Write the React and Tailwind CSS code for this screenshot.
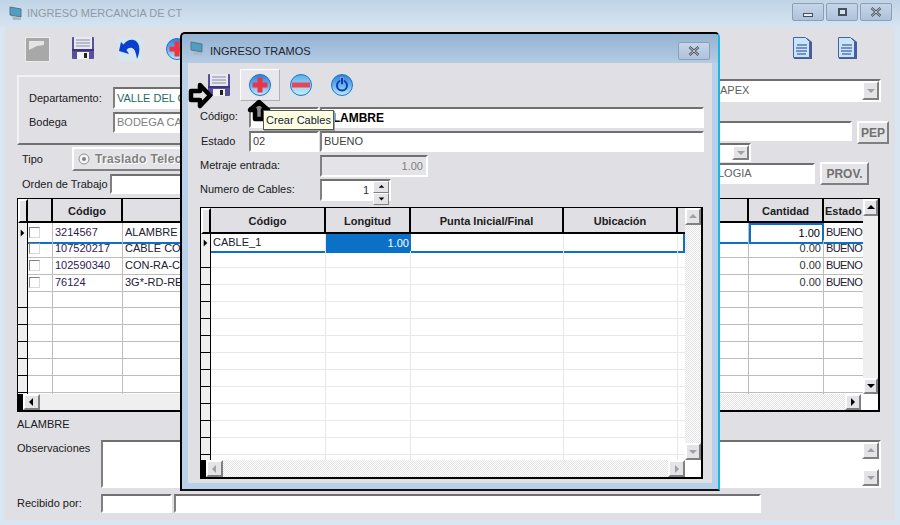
import React from 'react';

const sunken = 'border-2 border-t-[#707070] border-l-[#808080] border-r-white border-b-white';
const raised = 'border-2 border-t-white border-l-white border-r-[#808080] border-b-[#808080] bg-[#e4e4e8]';
const dither = 'bg-[repeating-conic-gradient(#e2e2e2_0_25%,#ffffff_0_50%)] bg-[length:2px_2px]';

function Field({ className = '', textClass = 'text-[#404040]', children }) {
  return (
    <div className={`${sunken} bg-white flex items-center px-[2px] whitespace-nowrap overflow-hidden ${textClass} ${className}`}>
      {children}
    </div>
  );
}

function Arrow({ dir, color = '#000' }) {
  const points = { up: '1,6 5,2 9,6', down: '1,3 5,7 9,3', left: '6,1 2,5 6,9', right: '3,1 7,5 3,9' };
  return (
    <svg width="10" height="10" viewBox="0 0 10 10">
      <polygon points={points[dir]} fill={color} />
    </svg>
  );
}

function ScrollBtn({ dir, color, className = '' }) {
  return (
    <div className={`${raised} flex items-center justify-center shrink-0 ${className}`}>
      <Arrow dir={dir} color={color} />
    </div>
  );
}

function Floppy() {
  return (
    <svg width="22" height="22" viewBox="0 0 22 22">
      <rect x="0" y="0" width="22" height="22" rx="1" fill="#5a4f9c" />
      <rect x="2" y="0" width="18" height="12" fill="#e8e8f0" />
      <path d="M4 3h14M4 6h14M4 9h14" stroke="#8a8aa8" strokeWidth="1" />
      <rect x="5" y="15" width="12" height="7" fill="#f2f2f2" />
      <rect x="12" y="16" width="3" height="5" fill="#222" />
      <rect x="0" y="12" width="22" height="2" fill="#3d3580" />
    </svg>
  );
}

function Ball({ id = 'ballFill', top = '#2f7fd8', mid = '#6fb5ee', children }) {
  return (
    <svg width="24" height="24" viewBox="-1 -1 24 24">
      <defs>
        <linearGradient id={id} x1="0" y1="0" x2="0" y2="1">
          <stop offset="0" stopColor={top} />
          <stop offset="0.55" stopColor={mid} />
          <stop offset="1" stopColor="#c4ecfb" />
        </linearGradient>
      </defs>
      <circle cx="11" cy="11" r="12" fill="#d2e6ee" />
      <circle cx="11" cy="11" r="10.5" fill={`url(#${id})`} stroke="#2c6fc0" />
      {children}
    </svg>
  );
}

const PlusBall = () => (
  <Ball id="plusFill">
    <path d="M8.500 3.500h5v5H18.500v5h-5v5h-5v-5h-5v-5h5z" fill="#ee3344" />
  </Ball>
);
const MinusBall = () => (
  <Ball id="minusFill" top="#58aee8" mid="#9ad4f4">
    <rect x="2" y="8.500" width="18" height="5" fill="#e8455a" />
  </Ball>
);
const PowerBall = () => (
  <Ball id="powerFill">
    <circle cx="11" cy="11.500" r="5" fill="none" stroke="#0b3fb0" strokeWidth="2" />
    <rect x="9.500" y="3.500" width="3" height="7" fill="#0b3fb0" stroke="#8cc4f0" strokeWidth="0.600" />
  </Ball>
);

function FlagIcon() {
  return (
    <svg width="25" height="25" viewBox="0 0 25 25">
      <rect x="0.500" y="0.500" width="24" height="24" fill="#a8a8a8" stroke="#ececec" />
      <polygon points="4,4 19,4 19,8 12,9 4,13" fill="#e4e4e4" />
    </svg>
  );
}

function UndoIcon() {
  return (
    <svg width="24" height="24" viewBox="0 0 24 24">
      <rect width="24" height="24" fill="#d5e6ee" />
      <path d="M1 14L3 5l2.500 2.500C10 1 19 1 21 9c1 4 0 8-2 13-1-6-2-10-5-11-2-.6-4 0-5.500 2L11 17z" fill="#0a3fd0" />
    </svg>
  );
}

function DocIcon() {
  return (
    <svg width="20" height="23" viewBox="0 0 20 23">
      <path d="M1 1h13l5 4v17H1z" fill="#4a5aa0" />
      <path d="M0.500 0.500h12l4 4v16H0.500z" fill="#c6e6fa" stroke="#5060a8" />
      <path d="M4 8h10M3 11h11M3 14h11M4 17h9" stroke="#2a3a90" strokeWidth="1" />
    </svg>
  );
}

function MonitorIcon() {
  return (
    <svg width="15" height="15" viewBox="0 0 15 15">
      <path d="M1 1l11 2v8L1 9z" fill="#4f9fc4" stroke="#5a7488" />
      <path d="M3 10l9 2v2H4z" fill="#aab8c4" />
    </svg>
  );
}

function WinBtn({ className = '', children }) {
  return (
    <div className={`h-[18px] rounded-[2px] border border-[#8c9fb8] bg-gradient-to-b from-[#c6d6e8] to-[#aec2da] flex items-center justify-center ${className}`}>
      {children}
    </div>
  );
}

const CloseGlyph = () => (
  <svg width="12" height="10" viewBox="0 0 12 10">
    <path d="M1.500 1l9 8M10.500 1l-9 8" stroke="#45505e" strokeWidth="2.400" />
    <path d="M1.500 1l9 8M10.500 1l-9 8" stroke="#e8edf2" strokeWidth="0.800" />
  </svg>
);

function Checkbox() {
  return <div className="w-[11px] h-[11px] border border-t-[#808080] border-l-[#808080] border-r-[#d8d8d8] border-b-[#d8d8d8] bg-white" />;
}

const mainRows = [
  ['3214567', 'ALAMBRE', '1.00', 'BUENO'],
  ['107520217', 'CABLE COA', '0.00', 'BUENO'],
  ['102590340', 'CON-RA-CO', '0.00', 'BUENO'],
  ['76124', '3G*-RD-RE', '0.00', 'BUENO'],
  [], [], [], [], [], [], [],
];

function MainGrid() {
  const cols = 'grid grid-cols-[10px_25px_70px_578px_48px_75px_39px]';
  const head = 'border-r-2 border-r-black border-b-2 border-b-black flex items-center justify-center font-bold pt-[3px]';
  return (
    <div className="ml-[12px] w-[863px] h-[214px] border-t border-l border-r-2 border-b-2 border-black flex flex-col overflow-hidden bg-white">
      <div className="flex flex-1 min-h-0">
        <div className="w-[845px] flex flex-col min-h-0">
          <div className={`${cols} h-[24px] shrink-0 bg-[#dfdfe4]`}>
            <div className={`${raised} !border-r-black !border-b-black`} />
            <div className={head} />
            <div className={head}>Código</div>
            <div className={head} />
            <div className={`${head} !justify-start pl-[2px]`}>V.</div>
            <div className={head}>Cantidad</div>
            <div className={`${head} !border-r-0 !justify-start pl-[1px]`}>Estado</div>
          </div>
          <div className="flex-1 min-h-0 overflow-hidden">
            {mainRows.map((r, i) => {
              const line = i === 0 ? 'border-b-2 border-b-[#0a70c8]' : 'border-b border-b-[#bdbdbd]';
              return (
                <div key={i} className={`${cols} h-[17px]`}>
                  <div className="bg-[#efefef] border-r border-r-black border-b border-b-black flex items-center justify-center">
                    {i === 0 && <Arrow dir="right" />}
                  </div>
                  <div className={`${line} border-r border-r-[#bdbdbd] flex items-center pl-[1px]`}>{r[0] && <Checkbox />}</div>
                  <div className={`${line} border-r border-r-[#bdbdbd] flex items-center px-[2px] text-[#301a50]`}>{r[0]}</div>
                  <div className={`${line} border-r border-r-[#bdbdbd] flex items-center px-[2px] text-[#202030]`}>{r[1]}</div>
                  <div className={`${line} border-r border-r-[#bdbdbd]`} />
                  <div className={`flex items-center justify-end px-[2px] ${i === 0 ? 'border-2 border-[#0a70c8] text-black' : `${line} border-r border-r-[#bdbdbd] text-[#303030]`}`}>{r[2]}</div>
                  <div className={`${line} flex items-center pl-[2px] text-[#202030] tracking-[-0.6px]`}>{r[3]}</div>
                </div>
              );
            })}
          </div>
        </div>
        <div className="flex-1 flex flex-col bg-[#efefef]">
          <ScrollBtn dir="up" className="h-[17px]" />
          <div className="flex-1" />
          <ScrollBtn dir="down" className="h-[16px]" />
        </div>
      </div>
      <div className="h-[16px] shrink-0 flex">
        <div className="w-[5px] bg-black" />
        <ScrollBtn dir="left" className="w-[17px]" />
        <div className="w-[460px] bg-[#efefef]" />
        <div className={`flex-1 ${dither}`} />
        <ScrollBtn dir="right" className="w-[16px]" />
        <div className="w-[17px] bg-white" />
      </div>
    </div>
  );
}

function DialogGrid() {
  const cols = 'grid grid-cols-[10px_115px_85px_153px_114px_7px]';
  const head = 'border-r-2 border-r-black border-b-2 border-b-black flex items-center justify-center font-bold pt-[3px]';
  const rows = Array.from({ length: 14 }, (_, i) => i);
  return (
    <div className="ml-[12px] mt-[6px] w-[503px] h-[272px] border-t border-l border-r-2 border-b-2 border-black flex flex-col overflow-hidden bg-white">
      <div className="flex flex-1 min-h-0">
        <div className="w-[484px] flex flex-col min-h-0">
          <div className={`${cols} h-[26px] shrink-0 bg-[#dfdfe4]`}>
            <div className={`${raised} !border-r-black !border-b-black`} />
            <div className={head}>Código</div>
            <div className={head}>Longitud</div>
            <div className={head}>Punta Inicial/Final</div>
            <div className={head}>Ubicación</div>
            <div className="border-b-2 border-b-black" />
          </div>
          <div className="flex-1 min-h-0 overflow-hidden">
            {rows.map((i) => {
              const line = i === 0 ? 'border-b-2 border-b-[#0a70c8]' : 'border-b border-b-[#e8e8e8]';
              return (
                <div key={i} className={`${cols} h-[17px]`}>
                  <div className="bg-[#efefef] border-r border-r-black border-b border-b-black flex items-center justify-center">
                    {i === 0 && <Arrow dir="right" />}
                  </div>
                  <div className={`${line} border-r border-r-[#e8e8e8] flex items-center px-[2px] text-[#202030]`}>{i === 0 && 'CABLE_1'}</div>
                  <div className={`flex items-center justify-end px-[2px] ${i === 0 ? 'bg-[#0a70c8] text-white' : `${line} border-r border-r-[#e8e8e8]`}`}>{i === 0 && '1.00'}</div>
                  <div className={`${line} border-r border-r-[#e8e8e8]`} />
                  <div className={`${line} border-r border-r-[#e8e8e8]`} />
                  <div className={`${line} ${i === 0 ? 'border-r-2 border-r-[#0a70c8]' : ''}`} />
                </div>
              );
            })}
          </div>
        </div>
        <div className={`flex-1 flex flex-col ${dither}`}>
          <ScrollBtn dir="up" color="#a0a0a0" className="h-[17px]" />
          <div className="flex-1" />
          <ScrollBtn dir="down" color="#a0a0a0" className="h-[17px]" />
        </div>
      </div>
      <div className="h-[17px] shrink-0 flex">
        <div className="w-[5px] bg-black" />
        <ScrollBtn dir="left" color="#a0a0a0" className="w-[17px]" />
        <div className={`flex-1 ${dither}`} />
        <ScrollBtn dir="right" color="#a0a0a0" className="w-[17px]" />
        <div className="w-[16px] bg-white" />
      </div>
    </div>
  );
}

function Dialog() {
  return (
    <div className="absolute left-[180px] top-[32px] w-[540px] h-[459px] rounded-t-[5px] border-2 border-black border-r-[#18b8e0] border-b-[#111] bg-[#b9d1e8] flex flex-col">
      <div className="h-[29px] shrink-0 rounded-t-[4px] bg-gradient-to-b from-[#94b2d2] to-[#b4cce4] flex items-center pl-[8px] pr-[8px] gap-[5px] text-[#1c2430]">
        <MonitorIcon />
        <span className="mt-[6px]">INGRESO TRAMOS</span>
        <WinBtn className="ml-auto w-[32px] mt-[4px]"><CloseGlyph /></WinBtn>
      </div>
      <div className="ml-[6px] mr-[6px] h-[420px] bg-[#dfdfe4] flex flex-col">
        <div className="h-[44px] shrink-0 flex items-start">
          <div className="ml-[20px] mt-[11px]"><Floppy /></div>
          <div className="ml-[10px] mt-[6px] w-[40px] h-[32px] border border-t-white border-l-white border-r-[#b0b0b0] border-b-[#b0b0b0] bg-[#e8e8ec] flex items-center justify-center"><PlusBall /></div>
          <div className="ml-[9px] mt-[10px]"><MinusBall /></div>
          <div className="ml-[17px] mt-[10px]"><PowerBall /></div>
        </div>
        <div className="h-[24px] shrink-0 flex items-start">
          <span className="ml-[12px] w-[49px] mt-[1px]">Código:</span>
          <Field className="w-[70px] h-[21px]" />
          <Field className="w-[384px] h-[21px] ml-[1px] text-[12px] font-bold" textClass="text-black">ALAMBRE</Field>
        </div>
        <div className="h-[24px] shrink-0 flex items-start">
          <span className="ml-[13px] w-[48px] mt-[2px]">Estado</span>
          <Field className="w-[70px] h-[21px]">02</Field>
          <Field className="w-[384px] h-[21px] ml-[1px]">BUENO</Field>
        </div>
        <div className="h-[24px] shrink-0 flex items-start">
          <span className="ml-[12px] w-[120px] mt-[2px]">Metraje entrada:</span>
          <div className={`${sunken} w-[108px] h-[22px] bg-[#e4e4e8] flex items-center justify-end px-[3px] text-[#808080]`}>1.00</div>
        </div>
        <div className="h-[22px] shrink-0 flex items-start">
          <span className="ml-[12px] w-[120px] mt-[2px]">Numero de Cables:</span>
          <div className={`${sunken} w-[71px] h-[22px] bg-white flex items-stretch justify-end text-[#303030]`}>
            <span className="self-center pr-[4px]">1</span>
            <div className="w-[16px] flex flex-col">
              <ScrollBtn dir="up" className="flex-1 !border-[1px] [&_svg]:w-[7px]" />
              <ScrollBtn dir="down" className="flex-1 !border-[1px] [&_svg]:w-[7px]" />
            </div>
          </div>
        </div>
        <DialogGrid />
      </div>
    </div>
  );
}

function Overlays() {
  return (
    <>
      <svg className="absolute left-[188px] top-[82px]" width="25" height="27" viewBox="0 0 25 27">
        <polygon points="3,9 12,9 12,3 22,13.500 12,24 12,18 3,18" fill="#dfdfe4" stroke="#000" strokeWidth="4.500" strokeLinejoin="round" />
      </svg>
      <svg className="absolute left-[247px] top-[99px]" width="24" height="24" viewBox="0 0 24 24">
        <polygon points="12,3 21,11 16,11 16,20 8,20 8,11 3,11" fill="#8a8a8a" stroke="#000" strokeWidth="4.500" strokeLinejoin="round" />
      </svg>
      <div className="absolute left-[263px] top-[110px] w-[71px] h-[20px] border border-[#555] bg-[#ffffe1] text-[#10203c] flex items-center justify-center shadow-[1px_1px_0_#a0a0a0] whitespace-nowrap">
        Crear Cables
      </div>
    </>
  );
}

export default function App() {
  return (
    <div className="relative w-[900px] h-[525px] overflow-hidden bg-[#d9e6f2] text-[11px] text-[#202020] font-['Liberation_Sans',Arial,sans-serif]">
      <div className="h-[27px] bg-gradient-to-b from-[#c0d4e6] to-[#d6e4f1] flex items-center pl-[9px] pr-[8px] gap-[3px]">
        <MonitorIcon />
        <span className="text-[#8f9aa6]">INGRESO MERCANCIA DE CT</span>
        <div className="ml-auto flex gap-[2px] -mt-[3px]">
          <WinBtn className="w-[32px]"><div className="w-[10px] h-[4px] mt-[5px] border border-[#45505e] bg-[#e8edf2]" /></WinBtn>
          <WinBtn className="w-[32px]"><div className="w-[9px] h-[8px] border-2 border-[#45505e] bg-[#d8e2ee]" /></WinBtn>
          <WinBtn className="w-[32px]"><CloseGlyph /></WinBtn>
        </div>
      </div>

      <div className="mx-[5px] h-[493px] bg-[#dfdfe4] flex flex-col">
        <div className="h-[48px] shrink-0 flex items-start pt-[10px]">
          <div className="ml-[20px]"><FlagIcon /></div>
          <div className="ml-[22px]"><Floppy /></div>
          <div className="ml-[24px]"><UndoIcon /></div>
          <div className="ml-[23px]"><PlusBall /></div>
          <div className="ml-auto mr-[37px] flex gap-[25px]"><DocIcon /><DocIcon /></div>
        </div>

        <div className="h-[75px] shrink-0 flex">
          <div className="h-[123px] shrink-0 w-[695px] ml-[12px]">
            <div className="h-[70px] border-2 border-t-[#f2f2f2] border-l-[#f2f2f2] border-r-[#808080] border-b-[#707070]">
              <div className="flex items-center mt-[10px]">
                <span className="ml-[10px] w-[84px]">Departamento:</span>
                <Field className="w-[400px] h-[22px]" textClass="text-[#1f6a6a]">VALLE DEL C</Field>
              </div>
              <div className="flex items-center mt-[3px]">
                <span className="ml-[10px] w-[84px]">Bodega</span>
                <Field className="w-[400px] h-[21px]" textClass="text-[#808080]">BODEGA CA</Field>
              </div>
            </div>
            <div className="flex items-center mt-[2px] h-[24px]">
              <span className="ml-[5px] w-[50px]">Tipo</span>
              <div className={`${raised} h-[24px] w-[500px] flex items-center pl-[4px] gap-[5px] text-[12px] tracking-[0.3px] font-bold text-[#808080] [text-shadow:1px_1px_0_#fff]`}>
                <svg width="12" height="12" viewBox="0 0 12 12">
                  <circle cx="6" cy="6" r="5" fill="#f4f4f4" stroke="#909090" />
                  <circle cx="6" cy="6" r="2" fill="#808080" />
                </svg>
                Traslado Telec
              </div>
            </div>
            <div className="flex items-center mt-[3px] h-[20px]">
              <span className="ml-[5px] w-[88px] whitespace-nowrap">Orden de Trabajo</span>
              <Field className="w-[300px] h-[20px]" />
            </div>
          </div>
          <div className="ml-[3px] w-[174px] pt-[4px] relative z-0">
            <div className={`${sunken} w-[166px] h-[23px] bg-white flex items-center pl-[3px] text-[#606060]`}>
              APEX
              <ScrollBtn dir="down" color="#a0a0a0" className="ml-auto w-[17px] h-[19px]" />
            </div>
            <div className="flex mt-[19px]">
              <Field className="w-[137px] h-[20px]" />
              <div className={`${raised} ml-[5px] w-[32px] h-[23px] flex items-center justify-center text-[12px] font-bold text-[#707070]`}>PEP</div>
            </div>
            <div className={`${sunken} -mt-[1px] w-[36px] h-[19px] bg-white flex justify-end`}>
              <ScrollBtn dir="down" color="#a0a0a0" className="w-[17px]" />
            </div>
            <div className="flex">
              <Field className="w-[100px] h-[21px] mt-[1px]" textClass="text-[#606060]"><span className="-ml-[1px]">LOGIA</span></Field>
              <div className={`${raised} ml-[5px] w-[49px] h-[23px] flex items-center justify-center text-[12px] font-bold text-[#707070]`}>PROV.</div>
            </div>
          </div>
        </div>

        <div className="h-[48px] shrink-0" />
        <MainGrid />

        <div className="ml-[12px] mt-[4px] h-[17px] flex items-center">ALAMBRE</div>

        <div className="flex mt-[7px] ml-[12px]">
          <span className="w-[84px]">Observaciones</span>
          <div className={`${sunken} w-[780px] h-[48px] bg-white flex justify-end`}>
            <div className="w-[17px] flex flex-col justify-between">
              <ScrollBtn dir="up" color="#a0a0a0" className="h-[17px]" />
              <ScrollBtn dir="down" color="#a0a0a0" className="h-[17px]" />
            </div>
          </div>
        </div>

        <div className="flex items-center mt-[6px] ml-[12px]">
          <span className="w-[84px]">Recibido por:</span>
          <Field className="w-[71px] h-[19px]" />
          <Field className="w-[587px] h-[19px] ml-[2px]" />
        </div>
      </div>

      <Dialog />
      <Overlays />
    </div>
  );
}
